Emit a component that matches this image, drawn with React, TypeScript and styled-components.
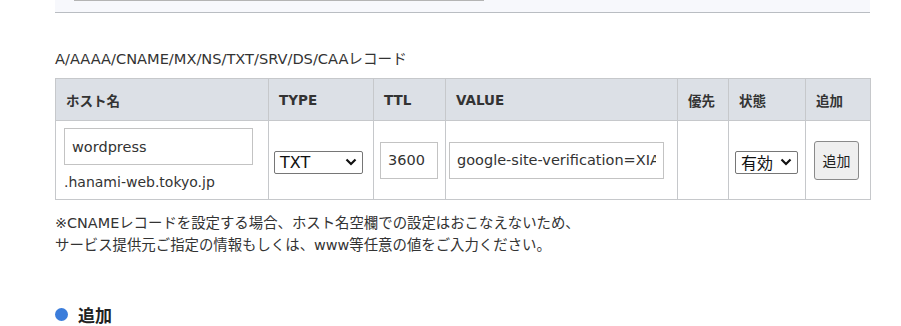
import React from "react";
import styled, { createGlobalStyle } from "styled-components";

const GlobalStyle = createGlobalStyle`
  body {
    margin: 0;
    background: #fff;
    color: #333;
    font-family: "DejaVu Sans", "Noto Sans CJK JP", sans-serif;
    overflow: hidden;
  }
`;

const Page = styled.div`
  width: 815px;
  padding-left: 55px;
`;

const SearchPanel = styled.div`
  margin-top: -41px;
  padding: 0 0 11px 19px;
  background: #f7f8fc;
  border-bottom: 1px solid #b9bdc2;
`;

const PanelInput = styled.div`
  width: 408px;
  height: 40px;
  background: #fff;
  border: 1px solid #b4b4b4;
`;

const Caption = styled.div`
  margin: 35px 0 8px;
  font-size: 14.6px;
  line-height: 22px;
`;

const Table = styled.table`
  width: 815px;
  border-collapse: collapse;
  table-layout: fixed;
  font-size: 14px;
`;

const Th = styled.th<{ $w: number }>`
  box-sizing: border-box;
  width: ${(p) => p.$w}px;
  height: 42px;
  padding: 0 10px;
  background: #dce0e6;
  border: 1px solid #c6c8cb;
  text-align: left;
  font-weight: bold;
  font-size: 13.5px;
  color: #333;
`;

const Td = styled.td<{ $pl?: number }>`
  padding: 7px 4px 7px ${(p) => p.$pl ?? 8}px;
  border: 1px solid #c6c8cb;
  vertical-align: middle;
`;

const TextInput = styled.input<{ $w: number }>`
  box-sizing: border-box;
  display: block;
  width: ${(p) => p.$w}px;
  height: 37px;
  padding: 0 7px;
  border: 1px solid #c3c3c3;
  font-family: inherit;
  font-size: 14.5px;
  color: #333;
  outline: none;
`;

const Domain = styled.div`
  margin-top: 7px;
  font-size: 14px;
  line-height: 20px;
`;

const SelectBox = styled.div<{ $w: number }>`
  box-sizing: border-box;
  display: flex;
  align-items: center;
  justify-content: space-between;
  width: ${(p) => p.$w}px;
  height: 23px;
  margin-top: 4px;
  padding: 0 5px 0 5px;
  border: 1px solid #767676;
  border-radius: 2px;
  background: #fff;
  font-size: 16px;
  color: #111;
`;

const AddButton = styled.button`
  box-sizing: border-box;
  display: block;
  width: 45px;
  height: 39px;
  padding: 0;
  border: 1px solid #8a8a8a;
  border-radius: 3px;
  background: #efefef;
  font-family: inherit;
  font-size: 14px;
  color: #222;
`;

const Note = styled.p`
  margin: 12px 0 0;
  font-size: 14.4px;
  line-height: 22px;
`;

const Heading = styled.h2`
  display: flex;
  align-items: center;
  gap: 10px;
  margin: 46px 0 0;
  font-size: 17px;
  font-weight: bold;
  color: #222;
`;

const Dot = styled.span`
  width: 13px;
  height: 13px;
  border-radius: 50%;
  background: #3b7ddb;
`;

function Chevron() {
  return (
    <svg width="12" height="8" viewBox="0 0 12 8">
      <path d="M1.5 1.5 L6 6 L10.5 1.5" fill="none" stroke="#111" strokeWidth="2.2" />
    </svg>
  );
}

export default function App() {
  return (
    <>
      <GlobalStyle />
      <Page>
        <SearchPanel>
          <PanelInput />
        </SearchPanel>
        <Caption>A/AAAA/CNAME/MX/NS/TXT/SRV/DS/CAAレコード</Caption>
        <Table>
          <thead>
            <tr>
              <Th $w={213}>ホスト名</Th>
              <Th $w={105}>TYPE</Th>
              <Th $w={72}>TTL</Th>
              <Th $w={232}>VALUE</Th>
              <Th $w={51}>優先</Th>
              <Th $w={77}>状態</Th>
              <Th $w={65}>追加</Th>
            </tr>
          </thead>
          <tbody>
            <tr>
              <Td $pl={8}>
                <TextInput $w={189} defaultValue="wordpress" />
                <Domain>.hanami-web.tokyo.jp</Domain>
              </Td>
              <Td $pl={5}>
                <SelectBox $w={89}>
                  TXT
                  <Chevron />
                </SelectBox>
              </Td>
              <Td $pl={6}>
                <TextInput $w={58} defaultValue="3600" />
              </Td>
              <Td $pl={3}>
                <TextInput $w={215} defaultValue="google-site-verification=XIA" />
              </Td>
              <Td />
              <Td $pl={6}>
                <SelectBox $w={63}>
                  有効
                  <Chevron />
                </SelectBox>
              </Td>
              <Td $pl={8}>
                <AddButton>追加</AddButton>
              </Td>
            </tr>
          </tbody>
        </Table>
        <Note>
          ※CNAMEレコードを設定する場合、ホスト名空欄での設定はおこなえないため、
          <br />
          サービス提供元ご指定の情報もしくは、www等任意の値をご入力ください。
        </Note>
        <Heading>
          <Dot />
          追加
        </Heading>
      </Page>
    </>
  );
}
